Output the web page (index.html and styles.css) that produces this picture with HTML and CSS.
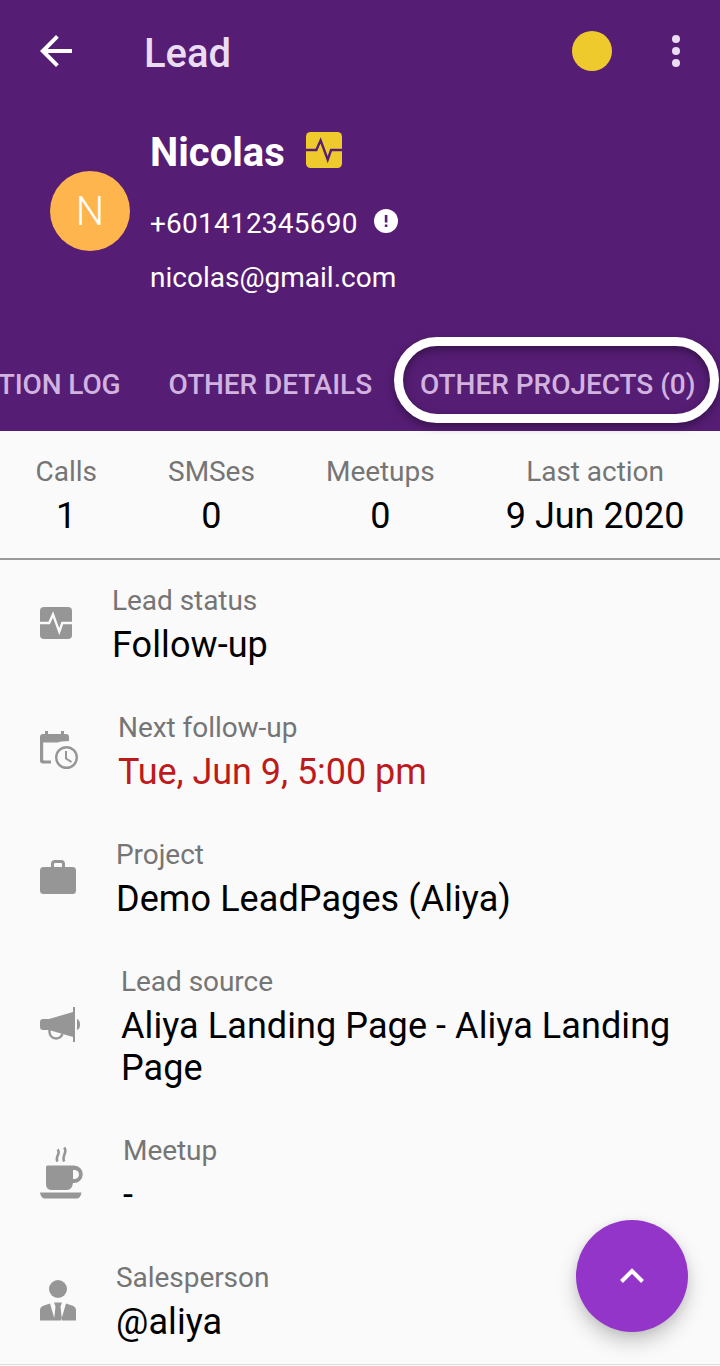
FILE: index.html
```html
<!DOCTYPE html>
<html lang="en">
<head>
  <meta charset="UTF-8" />
  <meta name="viewport" content="width=device-width, initial-scale=1" />
  <title>Lead</title>
  <link rel="stylesheet" href="styles.css">
</head>
<body>
  <header class="header">
    <div class="toolbar">
      <svg class="back" width="32" height="32" viewBox="0 0 32 32">
        <path d="M32 14H7.7L18.8 2.8 16 0 0 16l16 16 2.8-2.8L7.7 18H32z" fill="#fff" />
      </svg>
      <h1 class="title">Lead</h1>
      <span class="status-dot"></span>
      <svg class="more" width="8" height="32" viewBox="0 0 8 32" fill="#eadcf3">
        <circle cx="4" cy="4" r="4" /><circle cx="4" cy="16" r="4" /><circle cx="4" cy="28" r="4" />
      </svg>
    </div>

    <div class="profile">
      <div class="avatar">N</div>
      <div class="contact">
        <div class="name">
          <span>Nicolas</span>
          <svg width="36" height="36" viewBox="0 0 32 32">
            <rect width="32" height="32" rx="4" fill="#efca2d" />
            <path d="M0 16h9.2L13 7.4l6.3 17.2 3-8.6H32" fill="none" stroke="#551d74" stroke-width="2.1" />
          </svg>
        </div>
        <div class="phone">
          <span>+601412345690</span>
          <svg width="24" height="24" viewBox="0 0 24 24">
            <circle cx="12" cy="12" r="12" fill="#fff" />
            <path d="M10.8 6h2.6v7.4h-2.6zM10.8 15.6h2.6V18h-2.6z" fill="#551d74" />
          </svg>
        </div>
        <div class="email">nicolas@gmail.com</div>
      </div>
    </div>

    <nav class="tabs">
      <a class="tab">TION LOG</a>
      <a class="tab">OTHER DETAILS</a>
      <a class="tab highlighted">OTHER PROJECTS (0)</a>
    </nav>
  </header>

  <section class="stats">
    <div class="stat"><div class="label">Calls</div><div class="value">1</div></div>
    <div class="stat"><div class="label">SMSes</div><div class="value">0</div></div>
    <div class="stat"><div class="label">Meetups</div><div class="value">0</div></div>
    <div class="stat"><div class="label">Last action</div><div class="value">9 Jun 2020</div></div>
  </section>

  <main class="details">
    <div class="row">
      <svg width="32" height="32" viewBox="0 0 32 32">
        <rect width="32" height="32" rx="4" fill="#969696" />
        <path d="M0 16h9.2L13 7.4l6.3 17.2 3-8.6H32" fill="none" stroke="#fafafa" stroke-width="2.4" />
      </svg>
      <div><div class="label">Lead status</div><div class="value">Follow-up</div></div>
    </div>

    <div class="row">
      <svg width="38" height="39" viewBox="0 0 38 39" fill="#969696">
        <path d="M5 0h3v3h13V0h3v3h2q3 0 3 3v4q-8 0-11 1.500H3.200v17q0 1 1 1H11v3H3q-3 0-3-3V6q0-3 3-3h2z" />
        <circle cx="26.5" cy="26.5" r="10.3" fill="none" stroke="#969696" stroke-width="2.4" />
        <path d="M26 20v7.5l5.5 3.5" fill="none" stroke="#969696" stroke-width="2" />
      </svg>
      <div><div class="label">Next follow-up</div><div class="value overdue">Tue, Jun 9, 5:00 pm</div></div>
    </div>

    <div class="row">
      <svg width="36" height="34" viewBox="0 0 36 34" fill="#969696">
        <rect y="7" width="36" height="27" rx="3.5" />
        <path d="M12.5 8V4q0-2.500 2.500-2.500h6q2.500 0 2.500 2.500v4" fill="none" stroke="#969696" stroke-width="3" />
      </svg>
      <div><div class="label">Project</div><div class="value">Demo LeadPages (Aliya)</div></div>
    </div>

    <div class="row">
      <svg class="megaphone" width="41" height="35" viewBox="0 0 41 35" fill="#969696">
        <path d="M3 12h6L33 5V0h2v35h-2v-5L9 23H3q-3 0-3-3v-5q0-3 3-3zM37 12q3 1 3 5.500T37 23z" />
        <path d="M9.500 22v3a6.700 6.700 0 0 0 13 2" fill="none" stroke="#969696" stroke-width="2.400" />
      </svg>
      <div><div class="label">Lead source</div><div class="value">Aliya Landing Page - Aliya Landing Page</div></div>
    </div>

    <div class="row">
      <svg width="43" height="52" viewBox="0 0 43 52" fill="#969696">
        <path d="M17.500 2.500c4 4-3 7 0 12M24.200.500c4 5-3 8 0 14" fill="none" stroke="#969696" stroke-width="2.600" />
        <path fill-rule="evenodd" d="M6 20q0-1.500 1.500-1.500H34a8.700 8.700 0 0 1 0 17.500h-1q-1 7-6 7H12q-6 0-6-6zM33 23v9h1.500a4.500 4.500 0 0 0 0-9z" />
        <path d="M0 45.500h41.500q-1 6-5 6H5q-4 0-5-6z" />
      </svg>
      <div><div class="label">Meetup</div><div class="value">-</div></div>
    </div>

    <div class="row">
      <svg width="36" height="41" viewBox="0 0 36 41" fill="#969696">
        <circle cx="18" cy="9" r="9" />
        <path d="M10 23.500L15 40.500H0V30q0-3 4-4.500zM26 23.500L21 40.500h15V30q0-3-4-4.500zM14 22.500h8l-1.500 4 1.500 14h-8l1.500-14z" />
      </svg>
      <div><div class="label">Salesperson</div><div class="value">@aliya</div></div>
    </div>
  </main>

  <button class="fab">
    <svg width="24" height="16" viewBox="0 0 24 16">
      <path d="M1.500 13.500L12 3l10.500 10.500" fill="none" stroke="#fff" stroke-width="4" />
    </svg>
  </button>
</body>
</html>
```
FILE: styles.css
```css
* {
  box-sizing: border-box;
  margin: 0;
  padding: 0;
}

body {
  font-family: Roboto, sans-serif;
  font-size: 28px;
  line-height: 33px;
  background: #fafafa;
  color: #000;
  width: 720px;
  height: 1366px;
  overflow: hidden;
}

svg {
  display: block;
  flex: none;
}

.header {
  background: #551d74;
  color: #fff;
  height: 431px;
  display: flex;
  flex-direction: column;
}

.toolbar {
  height: 102px;
  padding: 0 40px;
  display: flex;
  align-items: center;
}

.title {
  font-size: 40px;
  font-weight: 500;
  line-height: 48px;
  color: #eadcf3;
  margin: 6px auto 0 72px;
}

.status-dot {
  width: 40px;
  height: 40px;
  border-radius: 50%;
  background: #efca2d;
  margin-right: 60px;
}

.profile {
  height: 235px;
  padding: 27px 50px 0;
  display: flex;
  gap: 20px;
}

.avatar {
  width: 80px;
  height: 80px;
  margin-top: 42px;
  border-radius: 50%;
  background: #ffb54d;
  font-size: 40px;
  font-weight: 300;
  line-height: 82px;
  text-align: center;
}

.name {
  display: flex;
  gap: 21px;
  font-size: 40px;
  font-weight: 700;
  line-height: 48px;
}

.name svg {
  margin-top: 3px;
}

.phone {
  display: flex;
  gap: 16px;
  margin-top: 30px;
  letter-spacing: 0.22px;
}

.phone svg {
  margin-top: 2px;
}

.email {
  margin-top: 21px;
}

.tabs {
  height: 94px;
  display: flex;
  justify-content: flex-end;
  align-items: center;
  padding-right: 1px;
}

.tab {
  flex: none;
  padding: 0 24px;
  font-weight: 500;
  letter-spacing: -0.1px;
  color: #d2b3e0;
  white-space: nowrap;
}

.tab.highlighted {
  width: 325px;
  height: 86px;
  margin: 0 0 8px -2px;
  padding-left: 17px;
  padding-right: 0;
  border: 9px solid #fff;
  border-radius: 43px;
  line-height: 77px;
  letter-spacing: -0.04px;
  box-shadow: 0 4px 8px rgba(0, 0, 0, 0.35), inset 0 4px 8px rgba(0, 0, 0, 0.35);
}

.stats {
  height: 129px;
  padding-top: 24px;
  border-bottom: 2px solid #999;
  display: flex;
  justify-content: space-around;
  text-align: center;
}

.label {
  color: #757575;
  letter-spacing: -0.05px;
}

.value {
  margin-top: 7px;
  font-size: 36px;
  line-height: 42px;
}

.row .value {
  letter-spacing: 0.08px;
}

.row .overdue {
  color: #bd1a1b;
  letter-spacing: -0.05px;
}

.details {
  border-bottom: 1px solid #ddd;
}

.row {
  display: flex;
  align-items: center;
  gap: 40px;
  padding: 24px 40px 21px;
}

.row svg {
  position: relative;
  top: -2px;
}

.row .megaphone {
  top: -3px;
}

.fab {
  position: absolute;
  left: 576px;
  top: 1220px;
  width: 112px;
  height: 112px;
  border: none;
  border-radius: 50%;
  background: #9435c9;
  box-shadow: 0 10px 20px rgba(0, 0, 0, 0.2), 0 2px 8px rgba(0, 0, 0, 0.08);
  display: flex;
  align-items: center;
  justify-content: center;
}
```
